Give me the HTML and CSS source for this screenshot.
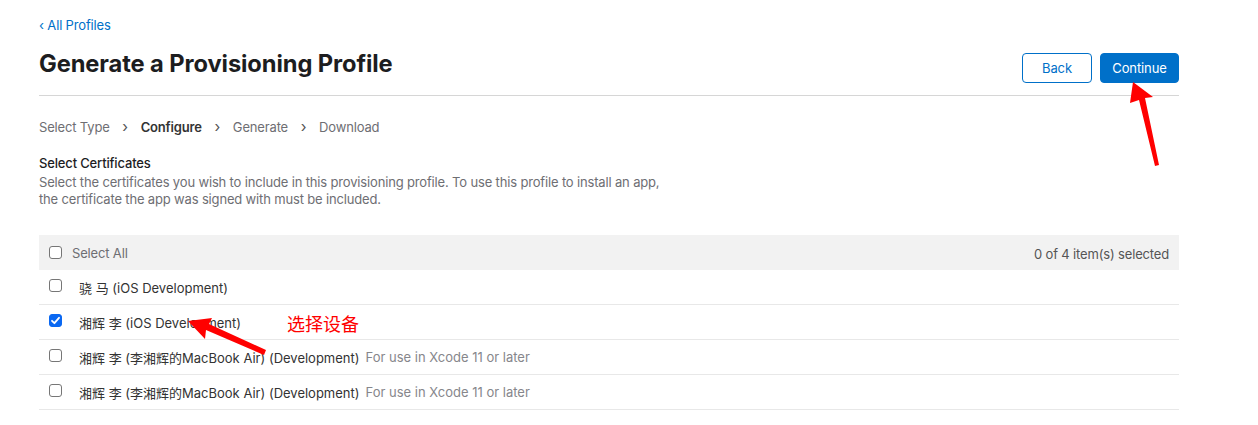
FILE: index.html
```html
<!DOCTYPE html>
<html lang="en">
<head>
<meta charset="utf-8">
<title>Generate a Provisioning Profile</title>
<link rel="stylesheet" href="styles.css">
</head>
<body>
<div class="page">
  <a class="back-link" href="#">&#8249; All Profiles</a>
  <div class="header">
    <h1 class="title">Generate a Provisioning Profile</h1>
    <div class="actions">
      <button class="btn btn-secondary">Back</button>
      <button class="btn btn-primary">Continue</button>
    </div>
  </div>
  <nav class="steps">
    <span class="step">Select Type</span>
    <span class="sep">&#8250;</span>
    <span class="step current">Configure</span>
    <span class="sep">&#8250;</span>
    <span class="step">Generate</span>
    <span class="sep">&#8250;</span>
    <span class="step">Download</span>
  </nav>
  <section class="section">
    <h2 class="section-title">Select Certificates</h2>
    <p class="section-desc">Select the certificates you wish to include in this provisioning profile. To use this profile to install an app,<br>the certificate the app was signed with must be included.</p>
  </section>
  <div class="table">
    <div class="table-head">
      <label class="select-all"><span class="cb"></span>Select All</label>
      <span class="count">0 of 4 item(s) selected</span>
    </div>
    <div class="row"><span class="cb"></span><span class="name">骁 马 (iOS Development)</span></div>
    <div class="row"><span class="cb checked"><svg viewBox="0 0 13 13" width="13" height="13"><path d="M3 6.8 L5.4 9.2 L10 3.8" fill="none" stroke="#fff" stroke-width="1.8" stroke-linecap="round" stroke-linejoin="round"/></svg></span><span class="name">湘辉 李 (iOS Development)</span></div>
    <div class="row"><span class="cb"></span><span class="name">湘辉 李 (李湘辉的MacBook Air) (Development)</span><span class="note">For use in Xcode 11 or later</span></div>
    <div class="row"><span class="cb"></span><span class="name">湘辉 李 (李湘辉的MacBook Air) (Development)</span><span class="note">For use in Xcode 11 or later</span></div>
  </div>
  <div class="annotation-text">选择设备</div>
  <svg class="annotations" width="1258" height="425" viewBox="0 0 1258 425">
    <polygon fill="#ff0000" points="1133,82 1153,97 1145,98 1159,165 1155,166 1139,100 1130,103"/>
    <polygon fill="#ff0000" points="188,321 212,318 209,324 266,350 264,355 206,330 205,339"/>
  </svg>
</div>
</body>
</html>
```
FILE: styles.css
```css
* { box-sizing: border-box; }
html, body { margin: 0; padding: 0; background: #fff; }
body {
  font-family: Inter, "Noto Sans", "Noto Sans CJK SC", sans-serif;
  color: #1d1d1f;
  letter-spacing: -0.16px;
  -webkit-font-smoothing: antialiased;
}
.page {
  position: relative;
  width: 1258px;
  height: 425px;
  padding: 16px 79px 0 39px;
  overflow: hidden;
}
.back-link {
  display: block;
  font-size: 13px;
  line-height: 18px;
  color: #0070c9;
  text-decoration: none;
}
.header {
  display: flex;
  justify-content: space-between;
  align-items: flex-start;
  padding-top: 19px;
  height: 62px;
  border-bottom: 1px solid #d6d6d6;
}
.title {
  margin: 0;
  font-size: 23.7px;
  font-weight: 700;
  line-height: 22px;
  letter-spacing: -0.1px;
  color: #1d1d1f;
}
.actions { display: flex; gap: 8px; margin-top: 0; }
.btn {
  height: 30px;
  border-radius: 4px;
  font-family: inherit;
  font-size: 13px;
  letter-spacing: -0.1px;
  padding: 0 11px;
  cursor: pointer;
}
.btn-secondary {
  width: 70px;
  background: #fff;
  border: 1px solid #0070c9;
  color: #0070c9;
}
.btn-primary {
  width: 79px;
  background: #0070c9;
  border: 1px solid #0070c9;
  color: #fff;
}
.steps {
  display: flex;
  align-items: center;
  margin-top: 22px;
  font-size: 13px;
  line-height: 18px;
  color: #6e6e73;
}
.step.current { color: #333; font-weight: 600; }
.sep { width: 31px; text-align: center; font-size: 15px; color: #555; }
.section { margin-top: 19px; }
.section-title {
  margin: 0;
  font-size: 13px;
  line-height: 17px;
  font-weight: 500;
  color: #1d1d1f;
}
.section-desc {
  margin: 2px 0 0;
  font-size: 13px;
  line-height: 17px;
  color: #6e6e73;
}
.table { margin-top: 27px; width: 1140px; }
.table-head {
  display: flex;
  justify-content: space-between;
  align-items: center;
  height: 35px;
  background: #f2f2f2;
  padding: 0 10px;
  font-size: 13px;
  color: #6e6e73;
}
.select-all { display: flex; align-items: center; gap: 10px; }
.count { color: #555; padding-top: 3px; }
.row {
  display: flex;
  align-items: center;
  height: 35px;
  padding: 0 10px;
  border-bottom: 1px solid #e8e8e8;
  font-size: 13px;
  letter-spacing: 0;
}
.row .cb { margin-right: 17px; margin-top: -4px; }
.cb {
  display: inline-flex;
  width: 13px;
  height: 13px;
  border: 1px solid #767676;
  border-radius: 3px;
  background: #fff;
  flex: none;
}
.cb.checked { background: #0a68f2; border-color: #0a68f2; }
.cb.checked svg { margin: -1px; }
.name { color: #333; font-family: Inter, "Noto Sans CJK SC", sans-serif; font-size: 13px; }
.note { color: #86868b; margin-left: 6px; }
.annotation-text {
  position: absolute;
  left: 287px;
  top: 311px;
  font-family: "Noto Sans CJK SC", sans-serif;
  font-size: 18px;
  line-height: 24px;
  letter-spacing: 0;
  color: #ff0000;
}
.annotations { position: absolute; left: 0; top: 0; pointer-events: none; }
```
